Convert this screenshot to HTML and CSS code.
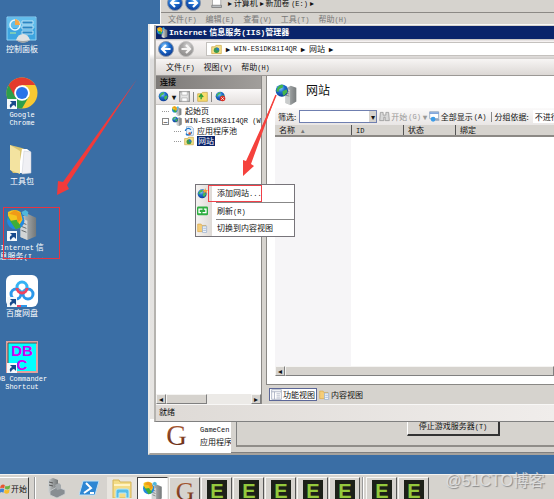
FILE: index.html
```html
<!DOCTYPE html>
<html lang="zh-CN">

<head>
    <meta charset="UTF-8">
    <meta name="viewport" content="width=device-width, initial-scale=1.0">
    <title>Internet 信息服务(IIS)管理器</title>
    <link rel="stylesheet" href="styles.css">
</head>

<body>
    <!-- shared icons -->
    <svg class="sprite" aria-hidden="true">
        <defs>
            <radialGradient id="blueBall" cx=".4" cy=".3" r=".8">
                <stop offset="0" stop-color="#8fd0ff" />
                <stop offset=".4" stop-color="#1d6fd0" />
                <stop offset="1" stop-color="#0a2f86" />
            </radialGradient>
            <linearGradient id="steel" x1="0" x2="1">
                <stop offset="0" stop-color="#d5d8d8" />
                <stop offset=".35" stop-color="#a5a9aa" />
                <stop offset="1" stop-color="#747879" />
            </linearGradient>
            <linearGradient id="brown" x1="0" x2="0" y1="0" y2="1">
                <stop offset="0" stop-color="#b5623a" />
                <stop offset="1" stop-color="#5a2412" />
            </linearGradient>
            <symbol id="globe" viewBox="0 0 16 16">
                <circle cx="8" cy="8" r="7" fill="url(#blueBall)" />
                <path d="M3 5q3-4 6-3l-1 3-3 1-1 3-2-1zM9 8l4-2 1 3-3 4-2-2z" fill="#49b851" />
            </symbol>
            <symbol id="server" viewBox="0 0 32 32">
                <path d="M15 8l8-4 8 3v20l-8 5-8-3z" fill="url(#steel)" />
                <path d="M15 8l7 2v22l-7-3z" fill="#c9cccc" />
                <path d="M16 12l5 1M16 15l5 1M16 18l5 1" stroke="#6b7072" />
                <path d="M23 10v20M26 9v20M29 8v19" stroke="#8d9293" stroke-width=".6" />
                <circle cx="10" cy="11" r="9" fill="url(#blueBall)" />
                <path d="M3 8q4-7 9-5l-1 4-5 2-1 4-3-1zM11 12l6-3 1 4-5 6-2-3z" fill="#45b54c" />
            </symbol>
            <symbol id="iis" viewBox="0 0 32 32">
                <path d="M14 9l7-4 9 4v19l-9 4-7-3z" fill="url(#steel)" />
                <path d="M14 9l7 3v20l-7-3z" fill="#d2d5d5" />
                <path d="M15 14l5 2M15 18l5 2M15 22l5 2" stroke="#62686a" />
                <circle cx="9" cy="12" r="9" fill="#2389df" />
                <path d="M1 9l8 12 5-2-1-6-7-6z" fill="#3eae39" />
                <path d="M1 3q7-4 13 0l2 8-3 5-3-5-6 1-3-5z" fill="#f4c51f" />
                <path d="M2 5l8 2 1 7 4-3-1-7-6-3z" fill="#f09a18" />
                <path d="M15 3l4-2 3 2-1 5-5-2z" fill="#4fb7dc" />
            </symbol>
            <symbol id="shortcut" viewBox="0 0 10 10">
                <path d="M0 0h10v10H0z" fill="#f4f8fb" />
                <path d="M3 2h6v6L7 6Q4 7 4 9.500Q1 6 5 4z" fill="#174a8c" />
            </symbol>
            <symbol id="folder" viewBox="0 0 16 16">
                <path d="M1 4h5l1-2h8v12H1z" fill="#f5df8c" stroke="#c9a540" />
                <circle cx="8" cy="9" r="4" fill="#3d9a4c" />
                <path d="M8 5a4 4 0 014 4H8z" fill="#2c74cf" />
            </symbol>
            <symbol id="arrowBall" viewBox="0 0 16 16">
                <circle cx="8" cy="8" r="7.500" fill="url(#blueBall)" stroke="#8b98aa" />
                <path d="M12.500 8H5M8 4L4 8l4 4" fill="none" stroke="#fff" stroke-width="2.200" />
            </symbol>
            <symbol id="pages" viewBox="0 0 16 16">
                <path d="M1 3h5l1 2h6v9H1z" fill="#f5cd78" stroke="#d7a94e" />
                <path d="M8 6h6v9H8z" fill="#fff" stroke="#8aa7cf" />
                <path d="M9 9h4M9 12h4" stroke="#6d8fc0" />
            </symbol>
            <symbol id="eapp" viewBox="0 0 20 22">
                <path d="M0 0h20v22H0z" fill="#1c2018" />
                <text x="10" y="18" text-anchor="middle" class="e-letter">E</text>
            </symbol>
        </defs>
    </svg>

    <main class="desktop">
        <nav class="shortcuts">
            <a class="shortcut" href="#">
                <svg viewBox="0 0 32 32">
                    <path d="M1 6h29v23H1z" fill="#3da5e0" stroke="#8fd3f5" />
                    <path d="M2 7h27v10H2z" fill="#62bdeb" />
                    <circle cx="9" cy="14" r="5" fill="none" stroke="#e5f6ff" stroke-width="1.500" />
                    <path d="M9 14V8a6 6 0 015 6z" fill="#f2a84b" />
                    <path d="M16 10h11v3H16zM16 15h11v3H16zM16 20h11v3H16z" fill="#2a86c4" stroke="#d6f0fc" stroke-width=".8" />
                    <path d="M4 22h6" stroke="#b5f095" />
                    <path d="M10 29q2-6 7-6t7 6q-7 5-14 0z" fill="#dfe2e3" />
                    <path d="M10 29q7 2 14 0-7 6-14 0z" fill="#9fa4a7" />
                </svg>
                <span>控制面板</span>
            </a>
            <a class="shortcut" href="#">
                <svg viewBox="0 0 32 32">
                    <circle cx="16" cy="16" r="15.500" fill="#f9c932" />
                    <path d="M16 16L2.600 8.200A15.500 15.500 0 0016 31.500L22.700 20z" fill="#2e9f4b" />
                    <path d="M16 8h13.300A15.500 15.500 0 002.600 8.200L9.300 20z" fill="#e33b2e" />
                    <circle cx="16" cy="16" r="7.800" fill="#fff" />
                    <circle cx="16" cy="16" r="6" fill="#2a74e8" />
                    <use href="#shortcut" x="1" y="22" width="10" height="10" />
                </svg>
                <span class="en">Google<br>Chrome</span>
            </a>
            <a class="shortcut" href="#">
                <svg viewBox="0 0 32 32">
                    <path d="M4 2l12 3 5 2v23H7l-3-4z" fill="#d9c46f" />
                    <path d="M16 6h5l4 3v21H12z" fill="#fff" />
                    <path d="M18 8l7 1v21l-9 1z" fill="#f0f0f4" stroke="#c7cbd5" stroke-width=".5" />
                    <path d="M4 2l10 6v23L4 27z" fill="#f3e3a0" />
                </svg>
                <span>工具包</span>
            </a>
            <a class="shortcut marked" href="#">
                <svg viewBox="0 0 32 32">
                    <use href="#iis" x="1" y="0" width="31" height="31" />
                    <use href="#shortcut" x="1" y="22" width="10" height="10" />
                </svg>
                <span><span class="en">Internet</span> 信<br>息服务<span class="en">(I...</span></span>
            </a>
            <a class="shortcut" href="#">
                <svg viewBox="0 0 32 32">
                    <rect width="32" height="32" rx="6" fill="#fff" />
                    <circle cx="10" cy="19" r="5" fill="none" stroke="#2c98ea" stroke-width="3" />
                    <circle cx="22" cy="19" r="5" fill="none" stroke="#2c98ea" stroke-width="3" />
                    <circle cx="16" cy="12" r="5" fill="none" stroke="#35b3f4" stroke-width="3" />
                    <path d="M11 13a5 5 0 0010 0" fill="none" stroke="#ec4561" stroke-width="3" />
                    <path d="M10 31h5" stroke="#ec4561" stroke-width="2" />
                    <path d="M15 31h6" stroke="#2c98ea" stroke-width="2" />
                    <use href="#shortcut" x="1" y="22" width="10" height="10" />
                </svg>
                <span>百度网盘</span>
            </a>
            <a class="shortcut" href="#">
                <svg viewBox="0 0 32 32">
                    <path d="M1 1h30v30H1z" fill="#0ff" stroke="#e2a29e" stroke-width="2" />
                    <path d="M2 31V2h29" fill="none" stroke="#555" />
                    <text x="16" y="15" text-anchor="middle" class="dbc">DB</text>
                    <text x="16" y="29" text-anchor="middle" class="dbc">C</text>
                    <use href="#shortcut" x="1" y="22" width="10" height="10" />
                </svg>
                <span class="en">DB Commander<br>Shortcut</span>
            </a>
        </nav>

        <!-- game center window at the back -->
        <section class="window game-window">
            <div class="game-info">
                <svg class="game-logo" viewBox="0 0 24 26"><text x="12" y="24" text-anchor="middle" class="g-letter">G</text></svg>
                <p><span class="en">GameCen</span><br>应用程序</p>
            </div>
            <div class="game-panel">
                <div class="game-group"><button class="stop-btn" type="button">停止游戏服务器<span class="en">(T)</span></button></div>
            </div>
        </section>

        <!-- explorer window -->
        <section class="window explorer">
            <div class="explorer-nav">
                <svg><use href="#arrowBall" /></svg>
                <svg class="flip"><use href="#arrowBall" /></svg>
                <svg class="drive" viewBox="0 0 16 16"><path d="M2 2h11v11H2z" fill="#fff" stroke="#999" /><path d="M1 11h13v3H1z" fill="#b9bdc0" stroke="#777" /></svg>
                <span class="path">▸ 计算机 ▸ 新加卷 <span class="en">(E:)</span> ▸</span>
            </div>
            <div class="explorer-menu">
                <span>文件<span class="en">(F)</span></span>
                <span>编辑<span class="en">(E)</span></span>
                <span>查看<span class="en">(V)</span></span>
                <span>工具<span class="en">(T)</span></span>
                <span>帮助<span class="en">(H)</span></span>
            </div>
        </section>

        <section class="window iis">
            <header class="titlebar">
                <svg><use href="#iis" /></svg>
                <h1><span class="en">Internet</span> 信息服务<span class="en">(IIS)</span>管理器</h1>
            </header>

            <div class="navbar">
                <button type="button" aria-label="后退"><svg><use href="#arrowBall" /></svg></button>
                <button type="button" aria-label="前进" class="off"><svg class="flip"><use href="#arrowBall" /></svg></button>
                <div class="address">
                    <svg><use href="#folder" /></svg>
                    <b>▸</b><span class="en">WIN-ES1DK81I4QR</span><b>▸</b><span>网站</span><b>▸</b>
                </div>
            </div>

            <div class="menubar">
                <button type="button">文件<span class="en">(F)</span></button>
                <button type="button">视图<span class="en">(V)</span></button>
                <button type="button">帮助<span class="en">(H)</span></button>
            </div>

            <div class="panes">
                <aside class="connections">
                    <h2>连接</h2>
                    <div class="tools">
                        <button type="button" aria-label="连接"><svg><use href="#globe" /></svg></button>
                        <b>▾</b>
                        <button type="button" aria-label="保存"><svg viewBox="0 0 16 16"><path d="M1 1h14v14H1z" fill="#e6e6e6" stroke="#9c9c9c" stroke-width="2" /><path d="M4 1h8v5H4zM4 10h8v5H4z" fill="#fff" stroke="#aaa" /></svg></button>
                        <i></i>
                        <button type="button" aria-label="向上"><svg viewBox="0 0 16 16"><path d="M1 4h5l2-2h7v13H1z" fill="#f7dc6c" stroke="#c3a23c" /><path d="M6 12V7M3 9l3-4 3 4" stroke="#2c9c35" stroke-width="2" fill="none" /></svg></button>
                        <i></i>
                        <button type="button" aria-label="断开"><svg viewBox="0 0 16 16"><use href="#globe" width="15" height="15" /><circle cx="11" cy="11" r="4" fill="#d82c22" /><path d="M9 9l4 4M13 9l-4 4" stroke="#fff" /></svg></button>
                    </div>
                    <ul class="tree">
                        <li><svg><use href="#iis" /></svg><span>起始页</span></li>
                        <li class="open"><svg><use href="#server" /></svg><span class="en">WIN-ES1DK81I4QR (WIN</span></li>
                        <li class="child"><svg viewBox="0 0 16 16"><path d="M4 1h8l3 3v11H4z" fill="#e9f2fb" stroke="#7f9fc4" /><path d="M2 8a5 5 0 019-2M12 9a5 5 0 01-9 3" fill="none" stroke="#1876cf" stroke-width="2" /><circle cx="9" cy="12" r="2" fill="#e05a2b" /></svg><span>应用程序池</span></li>
                        <li class="child selected"><svg><use href="#folder" /></svg><span>网站</span></li>
                    </ul>
                    <div class="scrollbar"><button type="button" aria-label="左">◂</button><div class="thumb"></div><button type="button" aria-label="右">▸</button></div>
                </aside>

                <div class="main">
                    <div class="content">
                        <div class="heading">
                            <svg><use href="#server" /></svg>
                            <h2>网站</h2>
                        </div>
                        <div class="filter">
                            <label for="filter">筛选:</label>
                            <div class="combo"><select id="filter"><option></option></select></div>
                            <button type="button" class="disabled"><svg viewBox="0 0 16 16"><path d="M2 2h4v4h4V2h4l1 12H9V9H7v5H1z" fill="#d8d8d8" stroke="#8d8d8d" /></svg>开始<span class="en">(G)</span></button>
                            <b class="disabled">▾</b>
                            <button type="button"><svg viewBox="0 0 16 16"><path d="M1 1h13v10H1z" fill="#fff" stroke="#7e93b0" /><path d="M1 3h13" stroke="#5a8ad0" stroke-width="2" /><circle cx="6" cy="12" r="3.500" fill="#3d9de8" /><path d="M9 13h6" stroke="#7e93b0" stroke-width="2" /></svg>全部显示<span class="en">(A)</span></button>
                            <i></i>
                            <label for="group">分组依据:</label>
                            <select id="group"><option>不进行分组</option></select>
                        </div>
                        <table>
                            <thead>
                                <tr><th class="name">名称 <small>▴</small></th><th class="id"><span class="en">ID</span></th><th class="state">状态</th><th>绑定</th></tr>
                            </thead>
                            <tbody>
                                <tr><td></td><td></td><td></td><td></td></tr>
                            </tbody>
                        </table>
                        <div class="scrollbar"><button type="button" aria-label="左">◂</button><div class="thumb"></div></div>
                    </div>
                    <div class="tabs">
                        <button type="button" class="active"><svg viewBox="0 0 16 16"><path d="M1 1h14v14H1z" fill="#fff" stroke="#8f99b0" /><path d="M1 4h14M5 4v11M8 7h5M8 10h5M8 13h5" stroke="#8f99b0" /></svg>功能视图</button>
                        <button type="button"><svg><use href="#pages" /></svg>内容视图</button>
                    </div>
                </div>
            </div>

            <footer class="status">就绪</footer>
        </section>

        <div class="context-menu" role="menu">
            <button type="button" role="menuitem"><svg viewBox="0 0 16 16"><use href="#globe" y="1" width="15" height="15" /><path d="M12 0l1 3 3 0-2 2 1 3-3-2-3 2 1-3-2-2h3z" fill="#f3a13a" /></svg><span class="hot">添加网站<span class="en">...</span></span></button>
            <button type="button" role="menuitem"><svg viewBox="0 0 16 16"><rect y="2" width="16" height="13" rx="2" fill="#2fae42" /><path d="M8 6H3v5h3M8 11h5V6h-3" fill="none" stroke="#fff" stroke-width="2" /></svg><span>刷新<span class="en">(R)</span></span></button>
            <button type="button" role="menuitem"><svg><use href="#pages" /></svg><span>切换到内容视图</span></button>
        </div>

        <!-- red pointer arrows -->
        <svg class="pointers" width="300" height="200" viewBox="0 0 300 200" aria-hidden="true">
            <path d="M137 79L67 185 69 189 57 195 58 181 63 182z" fill="#f23a3a" />
            <path d="M276 95L251 164 254 166 243 176 243 160 246 161z" fill="#f5423d" />
            <path d="M276 95L248 163" stroke="#f5423d" stroke-width="1.500" />
        </svg>

        <footer class="taskbar">
            <button type="button" class="start"><svg viewBox="0 0 16 16"><path d="M1 4q3-3 6-1L6 8Q3 6 0 8z" fill="#e8542f" /><path d="M8 4q3 2 7-1l-1 5q-3 3-7 0z" fill="#6db33f" /><path d="M0 9q3-2 6 0l-1 5q-3-2-5 0z" fill="#3a82d6" /><path d="M7 9q3 3 7 0l-1 5q-3 3-7 0z" fill="#f6bd2b" /></svg>开始</button>
            <i class="grip"></i>
            <div class="quick">
                <button type="button" aria-label="服务器管理器"><svg viewBox="0 0 20 20"><path d="M2 2l5-2 5 2v13l-5 2-5-3z" fill="url(#steel)" /><path d="M3 4l4 1M3 7l4 1" stroke="#555" /><path d="M4 13l7-4 8 3v4l-8 4-7-3z" fill="#888e92" stroke="#ced2d4" stroke-width=".8" /><path d="M9 7l4-2 2 2v4l-4 1z" fill="#a4a9ac" /></svg></button>
                <button type="button" aria-label="PowerShell"><svg viewBox="0 0 20 20"><path d="M4 3h16l-4 14H0z" fill="#2d86d3" stroke="#bfe0f5" /><path d="M7 5l5 5-7 5M11 15h4" fill="none" stroke="#fff" stroke-width="2" /></svg></button>
                <button type="button" aria-label="资源管理器" class="raised"><svg viewBox="0 0 20 20"><path d="M1 2h6l1 2h11v16H1z" fill="#f3dc86" stroke="#d6b456" /><path d="M2 7h16" stroke="#fff3c4" stroke-width="2" /><path d="M4 20v-7q0-2 2-2h9q2 0 2 2v7h-3v-5H7v5z" fill="#56bde8" stroke="#b9e8fa" /></svg></button>
            </div>
            <div class="tasks">
                <button type="button" class="active" aria-label="IIS"><svg><use href="#iis" /></svg></button>
                <button type="button" aria-label="GameCenter"><svg viewBox="0 0 24 26"><text x="12" y="24" text-anchor="middle" class="g-letter">G</text></svg></button>
                <button type="button" aria-label="E1"><svg><use href="#eapp" /></svg></button>
                <button type="button" aria-label="E2"><svg><use href="#eapp" /></svg></button>
                <button type="button" aria-label="E3"><svg><use href="#eapp" /></svg></button>
                <button type="button" aria-label="E4"><svg><use href="#eapp" /></svg></button>
                <button type="button" aria-label="E5"><svg><use href="#eapp" /></svg></button>
                <i class="grip"></i>
                <button type="button" aria-label="E6"><svg><use href="#eapp" /></svg></button>
                <button type="button" aria-label="E7"><svg><use href="#eapp" /></svg></button>
            </div>
        </footer>

        <div class="watermark">@51CTO博客</div>
    </main>
</body>

</html>
```
FILE: styles.css
```css
*,
*::before,
*::after {
    margin: 0;
    padding: 0;
    box-sizing: border-box;
}

body {
    height: 100vh;
    overflow: hidden;
    font-family: "Noto Sans CJK SC", sans-serif;
    font-size: 8px;
    line-height: 10px;
    color: #111;
    background-color: #3a6ea5;
}

button,
select {
    font: inherit;
    color: inherit;
    background: none;
    border: none;
    border-radius: 0;
    white-space: nowrap;
}

ul {
    list-style: none;
}

svg {
    display: block;
    flex: none;
    width: 11px;
    height: 11px;
}

.sprite {
    position: absolute;
    width: 0;
    height: 0;
}

.en {
    font-family: "Liberation Mono", monospace;
    font-size: 7px;
}

.flip {
    transform: scaleX(-1);
}

.desktop {
    position: relative;
    display: flex;
    flex-direction: column;
    justify-content: space-between;
    height: 100%;
    overflow: hidden;
}

/* desktop icons */
.shortcuts {
    display: grid;
    grid-template-columns: 44px;
    grid-auto-rows: 66px;
    padding-top: 11px;
}

.shortcut {
    display: flex;
    flex-direction: column;
    align-items: center;
    color: #fff;
    text-align: center;
    text-decoration: none;
    line-height: 8px;
    white-space: nowrap;
}

.shortcut svg {
    width: 32px;
    height: 32px;
    margin-bottom: 2px;
}

.shortcut.marked {
    position: relative;
}

.shortcut.marked::after {
    content: "";
    position: absolute;
    top: -2px;
    left: 3px;
    width: 57px;
    height: 52px;
    border: 1px solid #e63442;
}

.dbc {
    font: bold 15px "Liberation Sans", sans-serif;
    fill: #d400f0;
}

.g-letter {
    font: 31px "Liberation Serif", serif;
    fill: url(#brown);
}

.e-letter {
    font: bold 20px "Liberation Sans", sans-serif;
    fill: #94c93d;
}

/* windows */
.window {
    position: absolute;
    right: 0;
    background-color: #d6d3ce;
}

.game-window {
    top: 24px;
    bottom: 44px;
    left: 148px;
    display: flex;
    align-items: flex-end;
    background: linear-gradient(#fff, #fff 30px, #dedede 36px, #e8e6e3);
    border-left: 2px solid #ecebe8;
    border-bottom: 2px solid #a5a29d;
}

.game-info {
    display: flex;
    align-items: flex-start;
    gap: 12px;
    width: 81px;
    height: 34px;
    padding: 4px 0 0 15px;
    overflow: hidden;
    white-space: nowrap;
    background-color: #fff;
}

.game-info p {
    line-height: 12px;
}

.game-logo {
    width: 23px;
    height: 24px;
    overflow: visible;
}

.game-panel {
    flex: 1;
    height: 34px;
    padding: 0 0 5px 5px;
    background-color: #d6d3ce;
    border-bottom: 1px solid #808080;
}

.game-group {
    display: flex;
    justify-content: center;
    height: 100%;
    padding: 0 0 9px 116px;
    border-left: 1px solid #808080;
    border-bottom: 2px solid #908d89;
}

.stop-btn {
    width: 93px;
    padding-bottom: 2px;
    border: 1px solid #fff;
    border-right: 2px solid #333;
    border-bottom: 2px solid #333;
}

.explorer {
    top: 0;
    left: 160px;
    height: 25px;
    overflow: hidden;
    border-left: 1px solid #f5f5f5;
}

.explorer-nav {
    display: flex;
    align-items: center;
    gap: 2px;
    height: 13px;
    padding: 0 0 6px 6px;
    border-bottom: 1px solid #8c8985;
}

.explorer-nav svg {
    width: 16px;
    height: 16px;
}

.explorer-nav .drive {
    width: 12px;
    margin: 0 0 0 8px;
}

.explorer-nav .path {
    margin-left: 3px;
}

.explorer-menu {
    display: flex;
    gap: 9px;
    height: 12px;
    padding: 1px 0 0 7px;
    color: #777;
    border-bottom: 1px solid #f8f8f6;
}

/* iis manager */
.iis {
    top: 25px;
    bottom: 77px;
    left: 154px;
    display: flex;
    flex-direction: column;
    border-left: 2px solid #b5b3af;
    border-bottom: 1px solid #808080;
}

.titlebar {
    display: flex;
    align-items: center;
    gap: 1px;
    height: 14px;
    padding-left: 1px;
    color: #fff;
    background-color: #0a246a;
    border-top: 1px solid #d6d3ce;
}

.titlebar h1 {
    font-size: 8px;
    font-weight: bold;
    white-space: nowrap;
}

.titlebar .en {
    font-size: 8px;
}

.navbar {
    display: flex;
    align-items: center;
    gap: 4px;
    height: 20px;
    padding-left: 2px;
    background: linear-gradient(#bbb9b6, #f6f2f2 2px, #e7e4e2 16px, #cfccca);
}

.navbar button svg {
    width: 16px;
    height: 16px;
}

.navbar .off {
    filter: grayscale(1);
    opacity: .5;
}

.address {
    display: flex;
    flex: 1;
    align-items: center;
    gap: 4px;
    height: 14px;
    margin-left: 8px;
    padding-left: 4px;
    background-color: #fff;
    border: 1px solid #c4c1be;
    border-right: none;
}

.menubar {
    display: flex;
    gap: 9px;
    height: 17px;
    padding-left: 10px;
    background: linear-gradient(#f7f5f4, #dcd8d5);
    border-bottom: 1px solid #9b9895;
}

.panes {
    display: flex;
    flex: 1;
    gap: 4px;
    min-height: 0;
}

.connections {
    display: flex;
    flex-direction: column;
    width: 106px;
    background-color: #fff;
    border-right: 1px solid #8a8885;
}

.connections h2 {
    padding: 1px 4px 2px;
    font-size: 8px;
    background: linear-gradient(90deg, #7d7a78, #a19e9b);
}

.tools {
    display: flex;
    align-items: center;
    gap: 3px;
    height: 16px;
    padding-left: 2px;
    background: linear-gradient(#fbf9f9, #e4e0de);
    border-bottom: 1px solid #c9c6c3;
}

.tools i,
.filter i {
    width: 1px;
    height: 10px;
    background-color: #888;
}

.tree {
    flex: 1;
    padding-top: 1px;
    overflow: hidden;
    white-space: nowrap;
}

.tree li {
    display: flex;
    align-items: center;
    gap: 3px;
    height: 10px;
    padding-left: 16px;
}

.tree svg {
    width: 10px;
    height: 10px;
}

.tree li::before {
    content: "";
    flex: none;
    width: 7px;
    height: 1px;
    margin-left: -10px;
    border-top: 1px dotted #999;
}

.tree .open::before {
    content: "−";
    height: 7px;
    line-height: 5px;
    text-align: center;
    border: 1px solid #888;
}

.tree .child {
    padding-left: 28px;
}

.tree .selected span {
    padding: 0 1px;
    color: #fff;
    background-color: #0a246a;
}

.scrollbar {
    display: flex;
    height: 10px;
    background-color: #eceae7;
}

.scrollbar button,
.scrollbar .thumb {
    background-color: #d6d3ce;
    border: 1px solid #f5f4f2;
    border-right-color: #808080;
    border-bottom-color: #808080;
}

.scrollbar button {
    width: 10px;
    line-height: 8px;
}

.connections .thumb {
    width: 41px;
    margin-right: auto;
}

.main {
    display: flex;
    flex: 1;
    flex-direction: column;
    min-width: 0;
}

.content {
    display: flex;
    flex: 1;
    flex-direction: column;
    padding: 0 0 8px 8px;
    overflow: hidden;
    background-color: #fff;
    border-left: 1px solid #8a8885;
    border-bottom: 1px solid #8a8885;
}

.heading {
    display: flex;
    align-items: center;
    gap: 9px;
    height: 32px;
}

.heading svg {
    width: 22px;
    height: 22px;
    margin-top: 4px;
}

.heading h2 {
    padding-bottom: 4px;
    font-size: 12px;
    font-weight: normal;
    line-height: 14px;
}

.filter {
    display: flex;
    align-items: center;
    gap: 2px;
    height: 17px;
    padding-left: 3px;
    white-space: nowrap;
    background: linear-gradient(#fbfafa, #e9e6e5);
}

.filter button {
    display: flex;
    align-items: center;
    gap: 1px;
}

.filter select {
    appearance: none;
}

.combo {
    position: relative;
    flex: none;
    width: 78px;
    height: 13px;
    margin-left: 1px;
}

.combo select {
    width: 100%;
    height: 100%;
    background-color: #fff;
    border: 1px solid #6f7fb0;
}

.combo::after {
    content: "▾";
    position: absolute;
    top: 1px;
    right: 1px;
    width: 7px;
    line-height: 11px;
    text-align: center;
    background-color: #d6d3ce;
    pointer-events: none;
}

.filter i {
    flex: none;
    margin-left: 3px;
}

#group {
    flex: 1;
    height: 13px;
    min-width: 22px;
    margin-left: 2px;
    padding-left: 2px;
    background-color: #fff;
}

.disabled {
    color: #999;
}

table {
    flex: 1;
    display: flex;
    flex-direction: column;
}

thead,
tbody {
    display: block;
}

tbody {
    flex: 1;
    background: linear-gradient(90deg, #f6f5f7 76px, #fff 76px);
}

thead tr {
    display: flex;
    height: 12px;
    background-color: #d6d3ce;
    border-bottom: 2px solid #8c8985;
}

th {
    padding-left: 4px;
    font-weight: normal;
    text-align: left;
}

th + th {
    border-left: 1px solid #555;
}

th small {
    margin-left: 4px;
    font-size: 7px;
    color: #777;
}

.name {
    width: 76px;
}

.id,
.state {
    width: 52px;
}

.content .thumb {
    flex: 1;
}

.tabs {
    display: flex;
    align-items: center;
    gap: 2px;
    height: 19px;
    padding-left: 3px;
}

.tabs button {
    display: flex;
    align-items: center;
    gap: 1px;
    height: 13px;
}

.tabs .active {
    padding: 0 1px;
    background-color: #fff;
    border: 1px solid #5c6797;
}

.status {
    height: 17px;
    padding: 2px 3px;
    background: linear-gradient(90deg, #dedad6, #f0edeb);
    border-top: 1px solid #f8f7f6;
}

/* popup */
.context-menu {
    position: absolute;
    top: 184px;
    left: 195px;
    width: 100px;
    background: linear-gradient(90deg, #f5f3f1, #dedad6 16px, #fff 16px);
    border: 1px solid #77747a;
}

.context-menu button {
    display: flex;
    align-items: center;
    width: 100%;
    height: 17px;
    padding-left: 1px;
    text-align: left;
}

.context-menu button > span {
    flex: 1;
    margin-left: 8px;
    padding: 3px 0 3px 1px;
}

.context-menu button + button > span {
    border-top: 1px solid #888;
}

.context-menu button > .hot {
    flex: none;
    width: 54px;
    margin-left: 0;
    padding: 2px 0 2px 8px;
    border: 1px solid #f04048;
}

.pointers {
    position: absolute;
    top: 0;
    left: 0;
    width: 300px;
    height: 200px;
    pointer-events: none;
}

/* taskbar */
.taskbar {
    display: flex;
    height: 25px;
    padding-top: 2px;
    background-color: #d6d3ce;
    border-top: 1px solid #f3f2f0;
}

.start {
    display: flex;
    align-items: center;
    width: 29px;
    border-right: 1px solid #444;
    border-top: 1px solid #fff;
}

.grip {
    width: 2px;
    margin: 0 5px;
    border-left: 1px solid #999;
    border-right: 1px solid #fff;
}

.quick {
    display: flex;
    gap: 3px;
}

.quick button {
    width: 30px;
    padding: 0 5px;
}

.quick svg {
    width: 20px;
    height: 20px;
}

.quick .raised {
    background-color: #e8e5df;
}

.tasks {
    display: flex;
    gap: 1px;
}

.tasks .grip {
    margin: 0 1px;
}

.tasks button {
    display: flex;
    justify-content: center;
    width: 31px;
    padding-top: 2px;
    border: 1px solid #f8f7f5;
    border-right-color: #555;
    border-bottom: none;
}

.tasks .active {
    background-color: #fff;
    border-color: #444 #eee #eee #444;
}

.tasks svg {
    width: 20px;
    height: 22px;
    overflow: visible;
}

.watermark {
    position: absolute;
    right: 9px;
    bottom: 8px;
    font-family: "Liberation Sans", "Noto Sans CJK SC", sans-serif;
    font-size: 16px;
    line-height: 20px;
    color: rgba(232, 232, 232, .8);
    text-shadow: 1px 1px 1px #8a8a8a;
}
```
